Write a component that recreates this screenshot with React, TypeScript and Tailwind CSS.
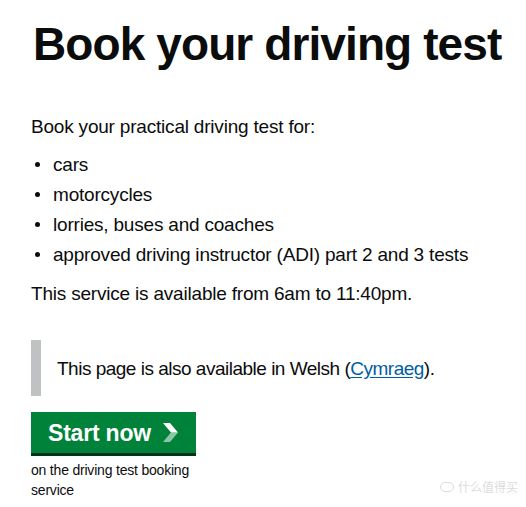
import React from 'react';

const items = [
  'cars',
  'motorcycles',
  'lorries, buses and coaches',
  'approved driving instructor (ADI) part 2 and 3 tests',
];

function Chevron() {
  return (
    <svg width="16" height="19" viewBox="0 0 16 19" className="ml-[12px]">
      {/* top half solid, bottom half faded like the old start button arrow */}
      <polygon points="0,0 7,0 15,9.5 8,9.5" fill="#ffffff" />
      <polygon points="8,9.5 15,9.5 7,19 0,19" fill="#ffffff" fillOpacity="0.55" />
    </svg>
  );
}

export default function App() {
  return (
    <div className="relative w-[526px] h-[507px] bg-white overflow-hidden text-[#0b0c0c] font-['Liberation_Sans',Arial,sans-serif]">
      <div className="pl-[31px] pt-[19px]">
        <h1 className="pl-[2px] text-[46px] leading-[50px] font-bold tracking-[-0.9px]">
          Book your driving test
        </h1>

        <p className="mt-[45px] text-[19px] leading-[25px] tracking-[-0.2px]">
          Book your practical driving test for:
        </p>

        <ul className="mt-[13px] flex flex-col gap-[5px] text-[19px] leading-[25px] tracking-[-0.2px]">
          {items.map((item) => (
            <li key={item} className="flex items-center">
              <span className="ml-[4px] w-[5px] h-[5px] rounded-full bg-[#0b0c0c]" />
              <span className="ml-[13px]">{item}</span>
            </li>
          ))}
        </ul>

        <p className="mt-[14px] text-[19px] leading-[25px] tracking-[-0.2px]">
          This service is available from 6am to 11:40pm.
        </p>

        <div className="mt-[34px] h-[56px] flex items-center border-l-[10px] border-[#bfc1c3] pl-[16px] text-[19px] leading-[25px] tracking-[-0.5px]">
          <p>
            This page is also available in Welsh (
            <a href="#" className="text-[#005ea5] underline underline-offset-[2px]">Cymraeg</a>
            ).
          </p>
        </div>

        <div className="mt-[16px] w-[165px] h-[41px] flex items-center pl-[17px] bg-[#00823b] shadow-[0_3px_0_#003618] text-white">
          <span className="text-[23px] leading-[28px] font-bold tracking-[-0.2px]">Start now</span>
          <Chevron />
        </div>

        <p className="mt-[7px] w-[175px] text-[14px] leading-[20px] tracking-[-0.2px]">
          on the driving test booking service
        </p>
      </div>

      <div className="absolute right-[8px] bottom-[11px] flex items-center gap-[4px] text-[12px] text-[#dcdcdc] font-['Noto_Sans_CJK_SC',sans-serif]">
        <span className="w-[14px] h-[10px] rounded-full border border-[#dcdcdc]" />
        <span>什么值得买</span>
      </div>
    </div>
  );
}
